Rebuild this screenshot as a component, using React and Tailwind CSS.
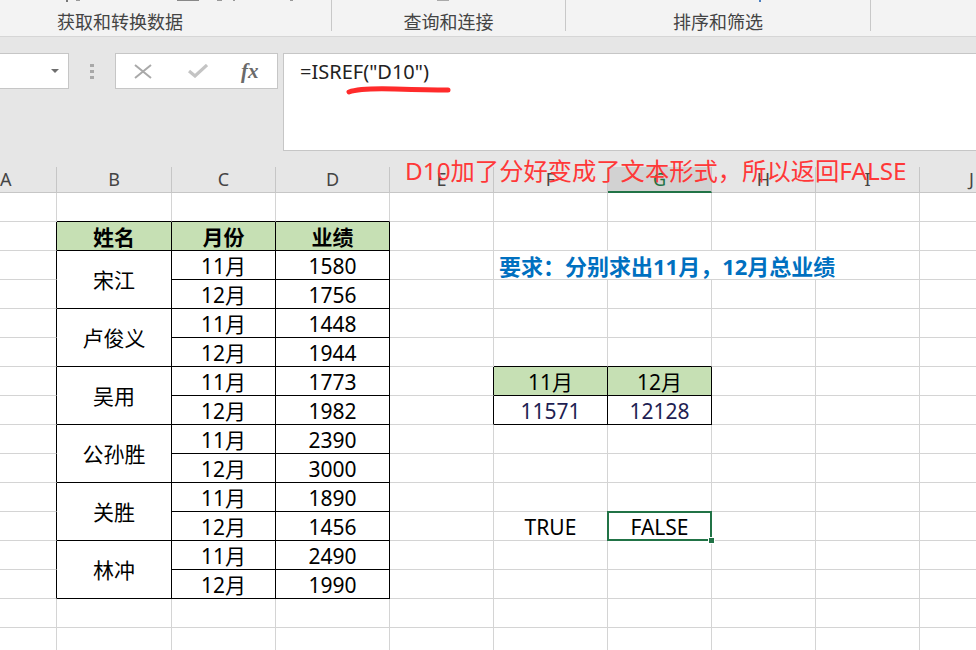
import React from 'react';

const COLS = ['A', 'B', 'C', 'D', 'E', 'F', 'G', 'H', 'I', 'J'];
const COL_W = ['w-[57px]', 'w-[115px]', 'w-[104px]', 'w-[114px]', 'w-[104px]', 'w-[114px]', 'w-[104px]', 'w-[104px]', 'w-[104px]', 'w-[104px]'];

const PEOPLE = [
  ['宋江', 1580, 1756],
  ['卢俊义', 1448, 1944],
  ['吴用', 1773, 1982],
  ['公孙胜', 2390, 3000],
  ['关胜', 1890, 1456],
  ['林冲', 2490, 1990],
];

const inMain = (r, c) => r >= 2 && r <= 14 && c >= 1 && c <= 3;
const inSmall = (r, c) => r >= 7 && r <= 8 && c >= 5 && c <= 6;
const inTable = (r, c) => inMain(r, c) || inSmall(r, c);

// what sits in a cell; 'skip' = covered by a merged neighbour
function getCell(r, c) {
  if (r === 2 && c >= 1 && c <= 3) return { text: ['姓名', '月份', '业绩'][c - 1], bold: true, green: true };
  if (r >= 3 && r <= 14 && c >= 1 && c <= 3) {
    const i = Math.floor((r - 3) / 2);
    const second = (r - 3) % 2 === 1;
    if (c === 1) return second ? 'skip' : { text: PEOPLE[i][0], rowSpan: 2 };
    if (c === 2) return { text: second ? '12月' : '11月' };
    return { text: String(PEOPLE[i][second ? 2 : 1]) };
  }
  if (r === 3 && c === 5) return { text: '要求：分别求出11月，12月总业绩', colSpan: 4, note: true };
  if (r === 3 && c >= 6 && c <= 8) return 'skip';
  if (r === 7 && c === 5) return { text: '11月', green: true };
  if (r === 7 && c === 6) return { text: '12月', green: true };
  if (r === 8 && c === 5) return { text: '11571', navy: true };
  if (r === 8 && c === 6) return { text: '12128', navy: true };
  if (r === 12 && c === 5) return { text: 'TRUE' };
  if (r === 12 && c === 6) return { text: 'FALSE', selected: true };
  return {};
}

function Sheet() {
  const cells = [];
  for (let r = 1; r <= 16; r++) {
    for (let c = 0; c < 10; c++) {
      const cell = getCell(r, c);
      if (cell === 'skip') continue;
      const rs = cell.rowSpan || 1;
      const cs = cell.colSpan || 1;
      const rb = r + rs - 1;
      const cb = c + cs - 1;
      const right = inTable(r, cb) || inTable(r, cb + 1) ? 'border-r-black' : 'border-r-[#d4d4d4]';
      const bottom = inTable(rb, c) || inTable(rb + 1, c) ? 'border-b-black' : 'border-b-[#d4d4d4]';
      cells.push(
        <div
          key={`${r}-${c}`}
          className={`relative flex items-center pt-[2px] border-r border-b whitespace-nowrap leading-none ${right} ${bottom} ${
            rs === 2 ? 'row-span-2' : ''
          } ${cs === 4 ? 'col-span-4' : ''} ${cell.green ? 'bg-[#c6e0b4]' : ''} ${
            cell.note ? 'justify-start pl-[5px] font-bold text-[22px] text-[#0070c0]' : 'justify-center text-[21px]'
          } ${cell.bold ? 'font-bold' : ''} ${cell.navy ? 'text-[#1e1e52]' : cell.note ? '' : 'text-black'} ${
            cell.selected ? 'z-10' : ''
          }`}
        >
          {cell.text}
          {cell.selected && (
            <div className="absolute -top-px -left-px -right-px -bottom-px border-2 border-[#217346]">
              <div className="absolute -right-[5px] -bottom-[5px] w-[7px] h-[7px] bg-[#217346] border border-white" />
            </div>
          )}
        </div>
      );
    }
  }
  return (
    <div className="grid w-[1024px] grid-cols-[57px_115px_104px_114px_104px_114px_104px_104px_104px_104px] auto-rows-[29px]">
      {cells}
    </div>
  );
}

function Ribbon() {
  return (
    <div className="relative h-[37px] flex bg-[#f3f3f3] border-b border-[#d6d6d6] text-[18px] text-[#444]">
      <div className="w-[332px]">
        <div className="h-[31px] pt-[11px] pl-[57px] leading-[22px] border-r border-[#c8c8c8]">获取和转换数据</div>
      </div>
      <div className="w-[234px]">
        <div className="h-[31px] pt-[11px] leading-[22px] text-center border-r border-[#c8c8c8]">查询和连接</div>
      </div>
      <div className="w-[305px]">
        <div className="h-[31px] pt-[11px] leading-[22px] text-center border-r border-[#c8c8c8]">排序和筛选</div>
      </div>
      <div className="flex-1" />
      {/* bottoms of the ribbon icons cut off by the crop */}
      <div className="absolute top-0 left-[66px] w-[2px] h-[2px] bg-[#777]" />
      <div className="absolute top-0 left-[76px] w-[4px] h-[1px] bg-[#999]" />
      <div className="absolute top-0 left-[177px] w-[22px] h-[1px] bg-[#888]" />
      <div className="absolute top-0 left-[217px] w-[5px] h-[1px] bg-[#999]" />
      <div className="absolute top-0 left-[233px] w-[2px] h-[1px] bg-[#999]" />
      <div className="absolute top-0 left-[290px] w-[3px] h-[1px] bg-[#999]" />
      <div className="absolute top-0 left-[437px] w-[12px] h-[1px] bg-[#aaa]" />
      <div className="absolute top-0 left-[759px] w-[2px] h-[2px] bg-[#4a7fc1]" />
    </div>
  );
}

function FormulaBar() {
  return (
    <div className="flex items-start pt-[16px]">
      <div className="w-[69px] h-[36px] bg-white border border-l-0 border-[#c6c6c6] flex items-center justify-end pr-[9px]">
        <svg width="8" height="4" viewBox="0 0 8 4">
          <path d="M0 0h8L4 4z" fill="#6e6e6e" />
        </svg>
      </div>
      <div className="w-[46px] h-[36px] flex flex-col items-center justify-center gap-[3px]">
        <div className="w-[4px] h-[3px] bg-[#a8a8a8]" />
        <div className="w-[4px] h-[3px] bg-[#a8a8a8]" />
        <div className="w-[4px] h-[3px] bg-[#a8a8a8]" />
      </div>
      <div className="w-[163px] h-[36px] bg-white border border-[#c6c6c6] flex items-center">
        <svg className="ml-[18px]" width="18" height="15" viewBox="0 0 18 15">
          <path d="M1 1L17 14M17 1L1 14" stroke="#a9a9a9" strokeWidth="2" fill="none" />
        </svg>
        <svg className="ml-[36px]" width="20" height="14" viewBox="0 0 20 14">
          <path d="M1 7L7 12L19 1" stroke="#c4c4c4" strokeWidth="3.2" fill="none" />
        </svg>
        <span className="ml-[33px] font-['Liberation_Serif',serif] italic font-bold text-[21px] leading-none text-[#6a6a6a]">
          fx
        </span>
      </div>
      <div className="ml-[5px] flex-1 h-[98px] bg-white border border-r-0 border-[#c6c6c6] pl-[16px] pt-[4px] text-[20px] leading-[28px] text-[#222]">
        =ISREF("D10")
      </div>
    </div>
  );
}

function ColumnHeaders() {
  return (
    <div className="mt-[16px] flex w-[1024px] h-[26px] text-[18px] leading-[24px] text-[#444]">
      {COLS.map((l, i) =>
        l === 'G' ? (
          <div key={l} className={`${COL_W[i]} h-[26px] bg-[#d2d2d2] border-r border-[#c6c6c6] border-b-2 border-b-[#217346] text-center text-[#217346]`}>
            {l}
          </div>
        ) : (
          <div
            key={l}
            className={`${COL_W[i]} h-[26px] border-r border-b border-[#c6c6c6] ${i === 0 ? 'text-left' : 'text-center'}`}
          >
            {l}
          </div>
        )
      )}
    </div>
  );
}

export default function App() {
  return (
    <div className="relative w-[976px] h-[650px] overflow-hidden bg-white font-['Noto_Sans','Noto_Sans_CJK_SC',sans-serif]">
      <Ribbon />
      <div className="bg-[#e6e6e6]">
        <FormulaBar />
        <ColumnHeaders />
      </div>
      <Sheet />

      {/* hand-drawn red underline under the argument */}
      <svg className="absolute left-[340px] top-[82px]" width="120" height="18" viewBox="0 0 120 18">
        <path d="M9 10 Q 20 6 55 7 T 108 8" stroke="#ff2b2b" strokeWidth="5" strokeLinecap="round" fill="none" />
      </svg>

      {/* red annotation over the column headers */}
      <div className="absolute left-[405px] top-[155px] text-[24.3px] leading-[32px] text-[#ff3838] whitespace-nowrap">
        D10加了分好变成了文本形式，所以返回FALSE
      </div>
    </div>
  );
}
